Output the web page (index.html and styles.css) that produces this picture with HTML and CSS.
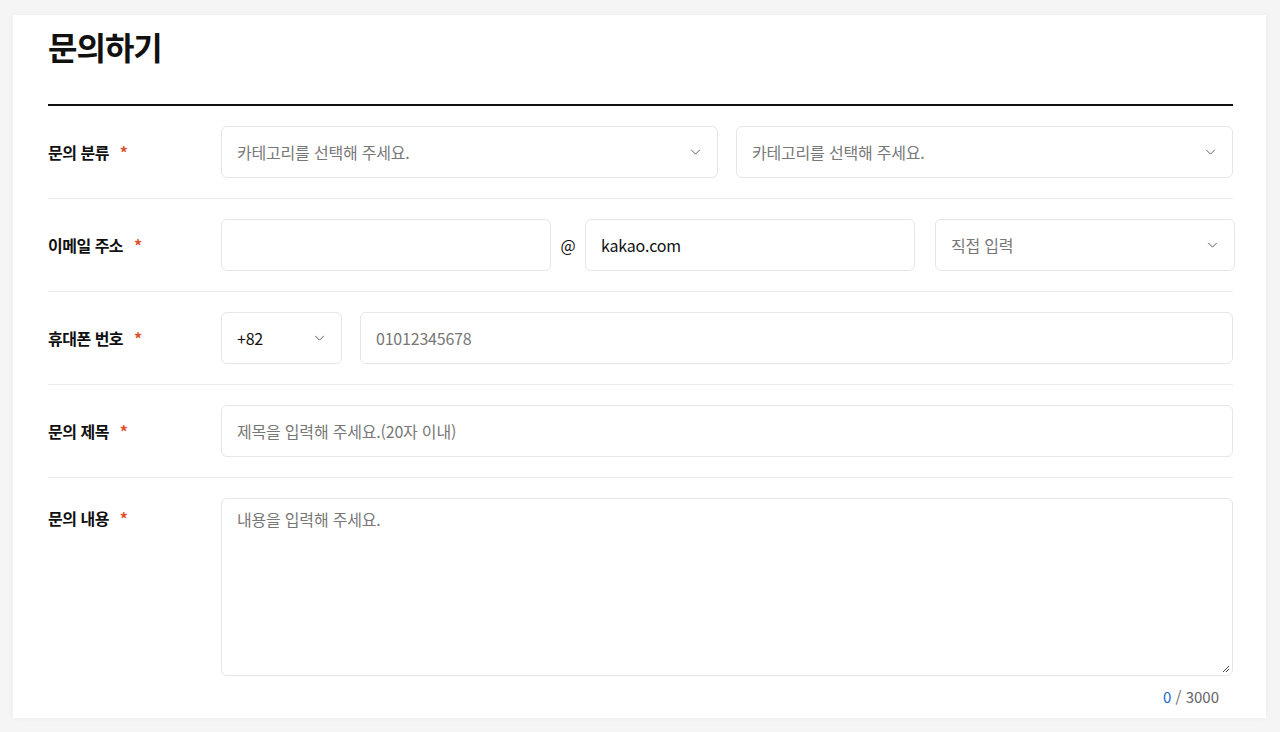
FILE: index.html
```html
<!DOCTYPE html>
<html lang="ko">
<head>
<meta charset="utf-8">
<title>문의하기</title>
<link rel="stylesheet" href="styles.css">
</head>
<body>
<div class="card">
  <h1 class="title">문의하기</h1>
  <div class="form">
    <div class="row">
      <div class="label">문의 분류 <span class="req">*</span></div>
      <div class="fields">
        <div class="field select grow placeholder">카테고리를 선택해 주세요.<svg class="chev" viewBox="0 0 12 7"><path d="M1 1l5 5 5-5"/></svg></div>
        <div class="field select grow placeholder">카테고리를 선택해 주세요.<svg class="chev" viewBox="0 0 12 7"><path d="M1 1l5 5 5-5"/></svg></div>
      </div>
    </div>
    <div class="row">
      <div class="label">이메일 주소 <span class="req">*</span></div>
      <div class="fields email">
        <div class="field w-email"></div>
        <div class="at">@</div>
        <div class="field w-email">kakao.com</div>
        <div class="field select w-domain placeholder">직접 입력<svg class="chev" viewBox="0 0 12 7"><path d="M1 1l5 5 5-5"/></svg></div>
      </div>
    </div>
    <div class="row">
      <div class="label">휴대폰 번호 <span class="req">*</span></div>
      <div class="fields">
        <div class="field select w-code">+82<svg class="chev" viewBox="0 0 12 7"><path d="M1 1l5 5 5-5"/></svg></div>
        <div class="field grow placeholder">01012345678</div>
      </div>
    </div>
    <div class="row">
      <div class="label">문의 제목 <span class="req">*</span></div>
      <div class="fields">
        <div class="field grow placeholder">제목을 입력해 주세요.(20자 이내)</div>
      </div>
    </div>
    <div class="row last">
      <div class="label">문의 내용 <span class="req">*</span></div>
      <div class="fields column">
        <div class="field textarea placeholder">내용을 입력해 주세요.<svg class="grip" viewBox="0 0 10 10"><path d="M9 3L3 9M9 6L6 9"/></svg></div>
        <div class="counter"><span class="count">0</span> / 3000</div>
      </div>
    </div>
  </div>
</div>
</body>
</html>
```
FILE: styles.css
```css
* { box-sizing: border-box; }
html, body { margin: 0; padding: 0; }
body {
  background: #f5f5f5;
  font-family: "Noto Sans CJK KR", "Noto Sans", sans-serif;
  color: #111;
  width: 1280px;
  height: 732px;
  overflow: hidden;
}
.card {
  margin: 15px 14px 0 13px;
  height: 703px;
  background: #fff;
  box-shadow: 0 0 6px rgba(0,0,0,0.04);
  padding: 7px 33px 0 35px;
}
.title {
  margin: 0;
  font-size: 32px;
  font-weight: 700;
  line-height: 48px;
  letter-spacing: -1px;
  color: #111;
  padding-bottom: 34px;
  border-bottom: 2px solid #111;
}
.row {
  display: flex;
  align-items: flex-start;
  padding: 20px 0;
  border-bottom: 1px solid #ececec;
}
.row.last { border-bottom: none; padding-bottom: 0; }
.label {
  width: 173px;
  flex: none;
  font-size: 16px;
  font-weight: 700;
  line-height: 52px;
  letter-spacing: -0.5px;
  color: #111;
}
.row.last .label { line-height: 40px; }
.req {
  color: #e0512d;
  font-weight: 700;
  margin-left: 7px;
}
.fields {
  flex: 1;
  display: flex;
  gap: 18px;
  align-items: center;
}
.fields.column { flex-direction: column; align-items: stretch; gap: 0; }
.field {
  position: relative;
  height: 52px;
  border: 1px solid #e6e6e6;
  border-radius: 6px;
  padding: 0 15px;
  font-size: 16px;
  line-height: 50px;
  color: #111;
  letter-spacing: -0.2px;
  white-space: nowrap;
}
.placeholder { color: #777; }
.grow { flex: 1; }
.select { padding-right: 40px; }
.chev {
  position: absolute;
  right: 16px;
  top: 22px;
  width: 11px;
  height: 6px;
  fill: none;
  stroke: #555;
  stroke-width: 1.1;
}
.fields.email { gap: 0; }
.w-email { width: 330px; }
.at {
  width: 34px;
  text-align: center;
  font-size: 16px;
  color: #111;
}
.w-domain { width: 300px; margin-left: 20px; }
.w-code { width: 121px; }
.textarea {
  height: 178px;
  line-height: 24px;
  padding-top: 8px;
}
.grip {
  position: absolute;
  right: 2px;
  bottom: 2px;
  width: 10px;
  height: 10px;
  fill: none;
  stroke: #444;
  stroke-width: 1;
}
.counter {
  text-align: right;
  padding-right: 14px;
  margin-top: 10px;
  font-size: 15px;
  color: #666;
  line-height: 22px;
}
.count { color: #1a6bd1; }
```
